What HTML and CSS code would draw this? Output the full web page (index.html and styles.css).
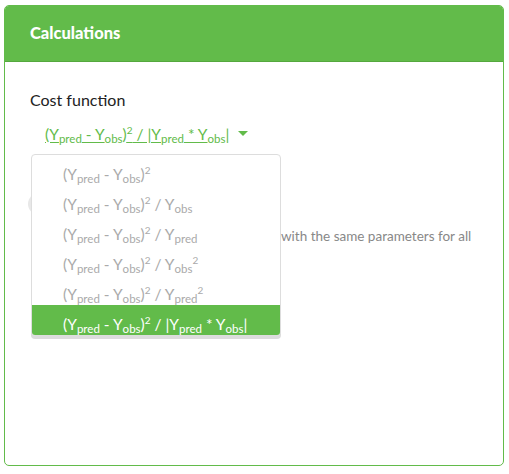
FILE: index.html
```html
<!DOCTYPE html>
<html>
<head>
<meta charset="utf-8">
<link rel="stylesheet" href="styles.css">
</head>
<body>
<div class="panel">
  <div class="panel-head">Calculations</div>
  <div class="panel-body">
    <div class="label">Cost function</div>
    <div class="select-wrap">
      <div class="select">
        <a class="sel-text">(Y<sub>pred</sub> - Y<sub>obs</sub>)<sup>2</sup> / |Y<sub>pred</sub> * Y<sub>obs</sub>|</a>
        <span class="caret"></span>
      </div>
      <ul class="menu">
        <li>(Y<sub>pred</sub> - Y<sub>obs</sub>)<sup>2</sup></li>
        <li>(Y<sub>pred</sub> - Y<sub>obs</sub>)<sup>2</sup> / Y<sub>obs</sub></li>
        <li>(Y<sub>pred</sub> - Y<sub>obs</sub>)<sup>2</sup> / Y<sub>pred</sub></li>
        <li>(Y<sub>pred</sub> - Y<sub>obs</sub>)<sup>2</sup> / Y<sub>obs</sub><sup>2</sup></li>
        <li>(Y<sub>pred</sub> - Y<sub>obs</sub>)<sup>2</sup> / Y<sub>pred</sub><sup>2</sup></li>
        <li class="active">(Y<sub>pred</sub> - Y<sub>obs</sub>)<sup>2</sup> / |Y<sub>pred</sub> * Y<sub>obs</sub>|</li>
      </ul>
    </div>
    <div class="option-row">
      <span class="toggle"></span>
    </div>
    <p class="option-text">with the same parameters for all</p>
  </div>
</div>
</body>
</html>
```
FILE: styles.css
```css
html, body {
  margin: 0;
  padding: 0;
  background: #fff;
}
body {
  font-family: "Source Sans Pro", "Lato", "Noto Sans", sans-serif;
  padding: 5px 5px 0 4px;
}
.panel {
  width: 498px;
  height: 459px;
  border: 1px solid #62bb4a;
  border-radius: 5px;
  overflow: hidden;
}
.panel-head {
  background: #62bb4a;
  color: #fff;
  font-weight: 900;
  font-size: 16.5px;
  height: 56px;
  box-sizing: border-box;
  padding: 17px 0 0 25px;
  border-bottom: 1px solid #55a83e;
}
.panel-body {
  padding: 27px 25px 0 25px;
}
.label {
  font-size: 16px;
  color: #222;
  line-height: 22px;
}
.select-wrap {
  position: relative;
  margin-top: 11px;
}
.select {
  display: flex;
  align-items: center;
  padding-left: 15px;
  height: 24px;
}
.sel-text {
  color: #62bb4a;
  font-size: 15.5px;
  text-decoration: underline;
  text-underline-offset: 2px;
}
.sel-text sub, .menu sub {
  font-size: 11.5px;
  vertical-align: -3px;
}
.sel-text sup, .menu sup {
  font-size: 10px;
  vertical-align: 6px;
}
.caret {
  width: 0;
  height: 0;
  margin-left: 9px;
  margin-top: -2px;
  border-left: 5px solid transparent;
  border-right: 5px solid transparent;
  border-top: 5px solid #62bb4a;
}
.menu {
  position: absolute;
  z-index: 2;
  left: 1px;
  top: 32px;
  width: 248px;
  margin: 0;
  padding: 0;
  list-style: none;
  background: #fff;
  border: 1px solid #ddd;
  border-radius: 4px;
  box-shadow: 0 3px 0 #dcdcdc;
  overflow: hidden;
}
.menu li {
  height: 30px;
  line-height: 30px;
  padding-left: 31px;
  font-size: 15.5px;
  color: #aaa;
  white-space: nowrap;
}
.menu li.active {
  background: #62bb4a;
  color: #fff;
}
.option-row {
  display: flex;
  align-items: center;
  margin-top: 47px;
  margin-left: -2px;
}
.toggle {
  width: 40px;
  height: 22px;
  border-radius: 11px;
  background: #e8e8e8;
  flex: none;
}
.option-text {
  font-size: 13.5px;
  color: #888;
  margin: 11px 0 0 251px;
  white-space: nowrap;
  line-height: 20px;
}
```
